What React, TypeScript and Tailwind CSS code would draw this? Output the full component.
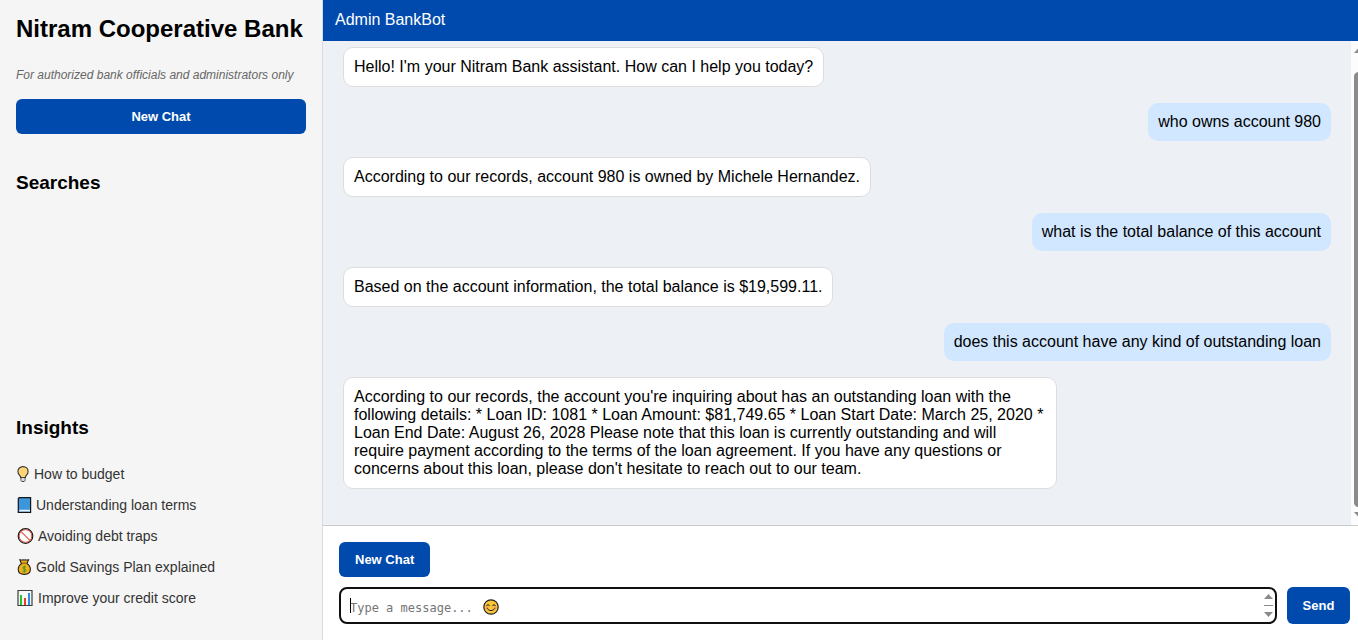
import { useState } from "react";

function BulbIcon() {
  return (
    <svg viewBox="0 0 14 16" className="h-4 w-3.5 shrink-0" aria-hidden="true">
      <path d="M5 10.500h4v4l-.8 1H5.800l-.8-1z" fill="#d9dde0" stroke="#333" strokeWidth=".9" />
      <path d="M7 .6C4 .6 1.900 2.700 1.900 5.400c0 1.700.8 2.800 1.600 3.700.7.8 1.200 1.500 1.300 2.500h4.400c.1-1 .6-1.700 1.300-2.500.8-.9 1.600-2 1.600-3.700C12.100 2.700 10 .6 7 .6z" fill="#ffd376" stroke="#333" strokeWidth="1.100" />
      <path d="M5.500 11.900h3v2.400h-3z" fill="#d9dde0" />
    </svg>
  );
}

function BookIcon() {
  return (
    <svg viewBox="0 0 16 16" className="h-4 w-4 shrink-0" aria-hidden="true">
      <path d="M3.100.6h11.500v14.800H2.300V1.600z" fill="#3c96dc" stroke="#151515" strokeWidth="1.200" />
      <path d="M3.600 12.700h10.400v1.700H3z" fill="#e8f3fb" />
    </svg>
  );
}

function BanIcon() {
  return (
    <svg viewBox="0 0 18 16" className="h-4 w-[18px] shrink-0" aria-hidden="true">
      <circle cx="9.500" cy="8" r="7.300" fill="#fff" stroke="#151515" strokeWidth="1.200" />
      <circle cx="9.500" cy="8" r="6.300" fill="none" stroke="#e0503f" strokeWidth="1" />
      <path d="m5.100 3.600 8.800 8.800" stroke="#ea5a47" strokeWidth="1.200" />
    </svg>
  );
}

function MoneyBagIcon() {
  return (
    <svg viewBox="0 0 16 16" className="h-4 w-4 shrink-0" aria-hidden="true">
      <path d="M5.900 4.400C3.700 5.600 2.200 7.500 2.200 10.300c0 3.300 2 5.100 6.100 5.100s6.100-1.800 6.100-5.100c0-2.800-1.500-4.700-3.700-5.900z" fill="#f3b01a" stroke="#222" strokeWidth="1.100" />
      <path d="M3.900.8c1.500.4 2.700-.1 4.300.2 1.600-.3 2.800.2 4.300-.2l-1.300 3.400h-6z" fill="#f3b01a" stroke="#222" strokeWidth="1.100" />
      <path d="M5.900 4.600h4.800" stroke="#b87c10" strokeWidth="1" />
      <path d="M10 8.200c-.8-.8-3.300-.8-3.300.7s3.300.9 3.300 2.500-2.600 1.500-3.500.5M8.300 6.600v7" fill="none" stroke="#3b9b1c" strokeWidth="1" />
    </svg>
  );
}

function ChartIcon() {
  return (
    <svg viewBox="0 0 18 16" className="h-4 w-[18px] shrink-0" aria-hidden="true">
      <path d="M2 .5h14v15H2z" fill="#f7f7f7" stroke="#3c3c3c" strokeWidth="1.200" />
      <path d="M4 5h2v10H4z" fill="#22c52c" />
      <path d="M8 8h2v7H8z" fill="#e83e2e" />
      <path d="M12 3h2v12h-2z" fill="#2f8be0" />
    </svg>
  );
}

function SmileIcon() {
  return (
    <svg viewBox="0 0 16 16" className="size-4" aria-hidden="true">
      <circle cx="8" cy="8" r="7.200" fill="#fcc63a" stroke="#222" strokeWidth="1.200" />
      <circle cx="3.900" cy="9" r="1.500" fill="#f39158" />
      <circle cx="12.100" cy="9" r="1.500" fill="#f39158" />
      <path d="M3.700 6.700c.4-1.500 2.200-1.500 2.600 0M9.700 6.700c.4-1.500 2.200-1.500 2.600 0M4.500 9.700c1.300 2.600 5.700 2.600 7 0" fill="none" stroke="#222" strokeWidth="1" strokeLinecap="round" />
    </svg>
  );
}

const insights = [
  { icon: BulbIcon, label: "How to budget" },
  { icon: BookIcon, label: "Understanding loan terms" },
  { icon: BanIcon, label: "Avoiding debt traps" },
  { icon: MoneyBagIcon, label: "Gold Savings Plan explained" },
  { icon: ChartIcon, label: "Improve your credit score" },
];

const messages = [
  { from: "bot", text: "Hello! I'm your Nitram Bank assistant. How can I help you today?" },
  { from: "user", text: "who owns account 980" },
  { from: "bot", text: "According to our records, account 980 is owned by Michele Hernandez." },
  { from: "user", text: "what is the total balance of this account" },
  { from: "bot", text: "Based on the account information, the total balance is $19,599.11." },
  { from: "user", text: "does this account have any kind of outstanding loan" },
  {
    from: "bot",
    text: "According to our records, the account you're inquiring about has an outstanding loan with the following details: * Loan ID: 1081 * Loan Amount: $81,749.65 * Loan Start Date: March 25, 2020 * Loan End Date: August 26, 2028 Please note that this loan is currently outstanding and will require payment according to the terms of the loan agreement. If you have any questions or concerns about this loan, please don't hesitate to reach out to our team.",
  },
];

function Sidebar() {
  return (
    <aside className="flex w-[323px] shrink-0 flex-col border-r border-[#d9dadc] bg-[#f5f5f5] px-4 pt-4">
      <h1 className="text-2xl leading-[26px] font-bold whitespace-nowrap">Nitram Cooperative Bank</h1>
      <p className="mt-[26px] text-xs leading-[14px] text-[#666] italic">
        For authorized bank officials and administrators only
      </p>
      <button type="button" className="mt-[17px] h-[35px] rounded-md bg-[#004aad] text-[13px] font-bold text-white">
        New Chat
      </button>
      <section className="mt-[38px] min-h-[245px]">
        <h2 className="text-[19px] leading-[22px] font-bold">Searches</h2>
      </section>
      <section>
        <h2 className="text-[19px] leading-[22px] font-bold">Insights</h2>
        <ul className="mt-[27px] flex flex-col gap-[15px]">
          {insights.map(({ icon: Icon, label }) => (
            <li key={label} className="flex items-center gap-1 text-sm leading-4 text-[#333]">
              <Icon />
              {label}
            </li>
          ))}
        </ul>
      </section>
    </aside>
  );
}

function ScrollTrack() {
  return (
    <div className="flex w-[7px] shrink-0 flex-col overflow-hidden bg-[#fcfcfc] pt-[7px] pb-2 pl-[3px]" aria-hidden="true">
      <svg viewBox="0 0 9 5" className="h-[5px] w-[9px] shrink-0">
        <path d="M0 5 4.500 0 9 5z" fill="#8b8b8b" />
      </svg>
      <div className="mt-[19px] mb-[5px] w-[9px] flex-1 rounded-full bg-[#8b8b8b]" />
      <svg viewBox="0 0 9 5" className="h-[5px] w-[9px] shrink-0">
        <path d="M0 0 4.500 5 9 0z" fill="#8b8b8b" />
      </svg>
    </div>
  );
}

export default function App() {
  const [draft, setDraft] = useState("");

  return (
    <div className="flex h-screen overflow-hidden bg-white font-['Liberation_Sans',Arial,sans-serif] text-black">
      <Sidebar />
      <main className="flex min-w-0 flex-1 flex-col">
        <header className="h-[41px] shrink-0 bg-[#004aad] px-3 py-2.5 text-base leading-5 text-white">Admin BankBot</header>
        <div className="flex min-h-0 flex-1 border-b border-[#ccc]">
          <div className="flex min-w-0 flex-1 flex-col gap-4 overflow-hidden bg-[#edf1f6] px-5 pt-1.5 text-base leading-[18px]">
            {messages.map((message) => (
              <p
                key={message.text}
                className={
                  message.from === "bot"
                    ? "max-w-[714px] self-start rounded-[10px] border border-[#ddd] bg-white p-2.5"
                    : "max-w-[714px] self-end rounded-[10px] bg-[#d1e7ff] p-2.5"
                }
              >
                {message.text}
              </p>
            ))}
          </div>
          <ScrollTrack />
        </div>
        <form className="flex shrink-0 flex-col gap-2.5 py-4 pr-2 pl-4" onSubmit={(event) => event.preventDefault()}>
          <button type="button" className="h-[35px] self-start rounded-md bg-[#004aad] px-4 text-[13px] font-bold text-white">
            New Chat
          </button>
          <div className="flex gap-2.5">
            <div className="relative min-w-0 flex-1">
              <textarea
                aria-label="Message"
                rows={1}
                value={draft}
                onChange={(event) => setDraft(event.target.value)}
                placeholder="Type a message..."
                className="block h-[37px] w-full resize-none overflow-hidden rounded-lg border-2 border-[#101010] bg-white px-[9px] py-2.5 font-['DejaVu_Sans_Mono',monospace] text-xs leading-[18px] outline-none placeholder:text-[#757575]"
              />
              {draft === "" && (
                <div className="pointer-events-none absolute top-3 left-36">
                  <SmileIcon />
                </div>
              )}
              <span className="pointer-events-none absolute top-[11px] left-[11px] h-[15px] w-px bg-black" />
              <svg viewBox="0 0 11 25" className="pointer-events-none absolute top-[6px] right-[3px] h-[25px] w-[11px]" aria-hidden="true">
                <path d="M1 6 5.500 1 10 6zM1 19h9l-4.500 5zM1 12h9v1H1z" fill="#8b8b8b" />
              </svg>
            </div>
            <button type="submit" className="w-[63px] rounded-md bg-[#004aad] text-[13px] font-bold text-white">
              Send
            </button>
          </div>
        </form>
      </main>
    </div>
  );
}
